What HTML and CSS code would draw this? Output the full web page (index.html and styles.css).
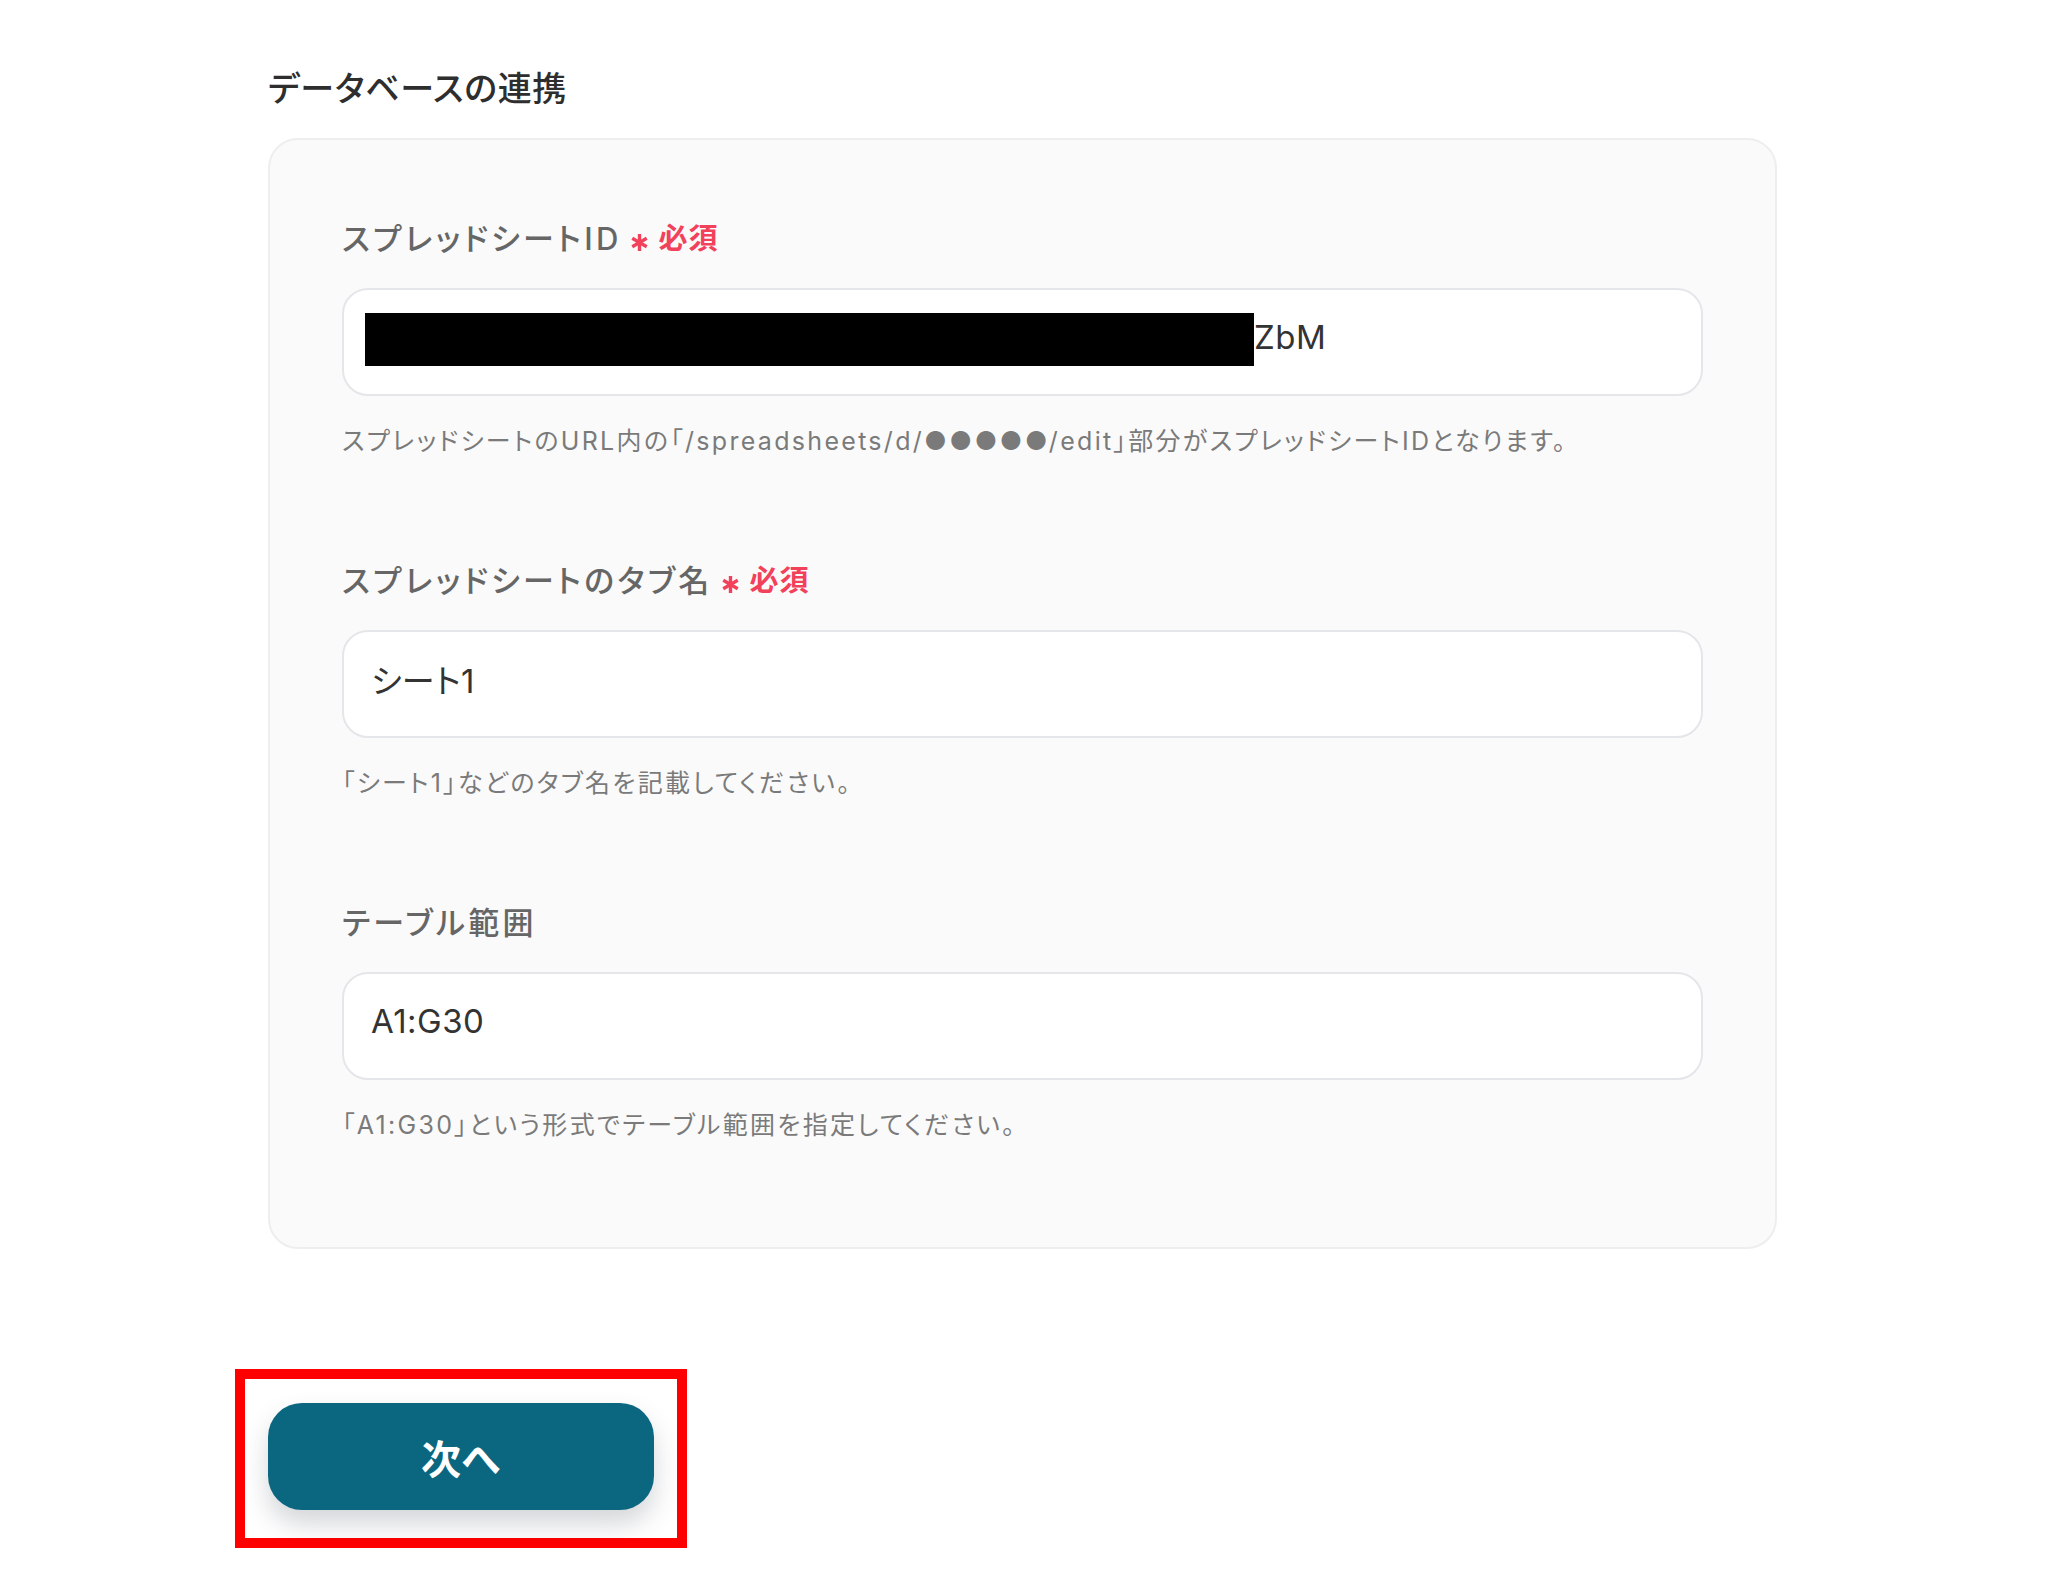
FILE: index.html
```html
<!DOCTYPE html>
<html lang="ja">
<head>
<meta charset="utf-8">
<title>データベースの連携</title>
<link rel="stylesheet" href="styles.css">
</head>
<body>
<main class="page">
  <h2 class="section-title">データベースの連携</h2>
  <section class="card">
    <div class="field">
      <div class="label">スプレッドシートID<span class="req"><svg class="ast" viewBox="0 0 20 20"><path d="M10 2v16M3.1 6l13.8 8M3.1 14l13.8-8"/></svg>必須</span></div>
      <div class="input"><span class="redact"></span>ZbM</div>
      <p class="help">スプレッドシートのURL内の「/spreadsheets/d/●●●●●/edit」部分がスプレッドシートIDとなります。</p>
    </div>
    <div class="field">
      <div class="label">スプレッドシートのタブ名<span class="req"><svg class="ast" viewBox="0 0 20 20"><path d="M10 2v16M3.1 6l13.8 8M3.1 14l13.8-8"/></svg>必須</span></div>
      <div class="input">シート1</div>
      <p class="help">「シート1」などのタブ名を記載してください。</p>
    </div>
    <div class="field">
      <div class="label">テーブル範囲</div>
      <div class="input">A1:G30</div>
      <p class="help">「A1:G30」という形式でテーブル範囲を指定してください。</p>
    </div>
  </section>
  <div class="highlight">
    <button class="next-btn" type="button">次へ</button>
  </div>
</main>
</body>
</html>
```
FILE: styles.css
```css
html, body {
  margin: 0;
  padding: 0;
  background: #ffffff;
}
body {
  font-family: "Inter", "Noto Sans CJK JP", sans-serif;
  font-feature-settings: "palt";
  color: #333333;
}
.page {
  padding: 65px 0 0 268px;
  display: flex;
  flex-direction: column;
  align-items: flex-start;
}
.section-title {
  margin: 0 0 25px 0;
  font-size: 34px;
  line-height: 48px;
  font-weight: 500;
  letter-spacing: 0.7px;
  color: #2e2e2e;
}
.card {
  box-sizing: border-box;
  width: 1509px;
  background: #fafafa;
  border: 2px solid #eeeeee;
  border-radius: 30px;
  padding: 78px 72px 104px 72px;
  display: flex;
  flex-direction: column;
  gap: 101px;
}
.field {
  display: flex;
  flex-direction: column;
}
.label {
  display: flex;
  align-items: center;
  font-size: 31px;
  line-height: 42px;
  letter-spacing: 3.3px;
  color: #666666;
  font-weight: 500;
}
.req {
  display: inline-flex;
  align-items: center;
  margin-left: 7px;
  color: #f2415a;
  font-size: 29px;
  font-weight: 600;
  letter-spacing: 1px;
}
.ast {
  width: 21px;
  height: 21px;
  margin-right: 9px;
  margin-top: 6px;
  stroke: #f2415a;
  stroke-width: 3.2;
  fill: none;
}
.input {
  box-sizing: border-box;
  margin-top: 28px;
  height: 108px;
  background: #ffffff;
  border: 2px solid #e4e6ea;
  border-radius: 26px;
  padding: 0 28px 10px 27px;
  display: flex;
  align-items: center;
  font-size: 33px;
  letter-spacing: 0.5px;
  color: #333333;
}
.redact {
  display: inline-block;
  width: 889px;
  height: 53px;
  background: #000000;
  margin-left: -6px;
  margin-top: 4px;
}
.help {
  margin: 27px 0 0 0;
  font-size: 25px;
  line-height: 36px;
  letter-spacing: 2.3px;
  color: #7a7a7a;
}
.highlight {
  margin: 120px 0 0 -33px;
  border: 10px solid #ff0000;
  padding: 24px 23px 28px 23px;
}
.next-btn {
  display: block;
  width: 386px;
  height: 107px;
  border: none;
  border-radius: 34px;
  background: #0b6780;
  color: #ffffff;
  font-family: "Noto Sans CJK JP", sans-serif;
  font-size: 40px;
  font-weight: 700;
  box-shadow: 0 14px 26px rgba(60, 70, 80, 0.22);
  cursor: pointer;
}
```
